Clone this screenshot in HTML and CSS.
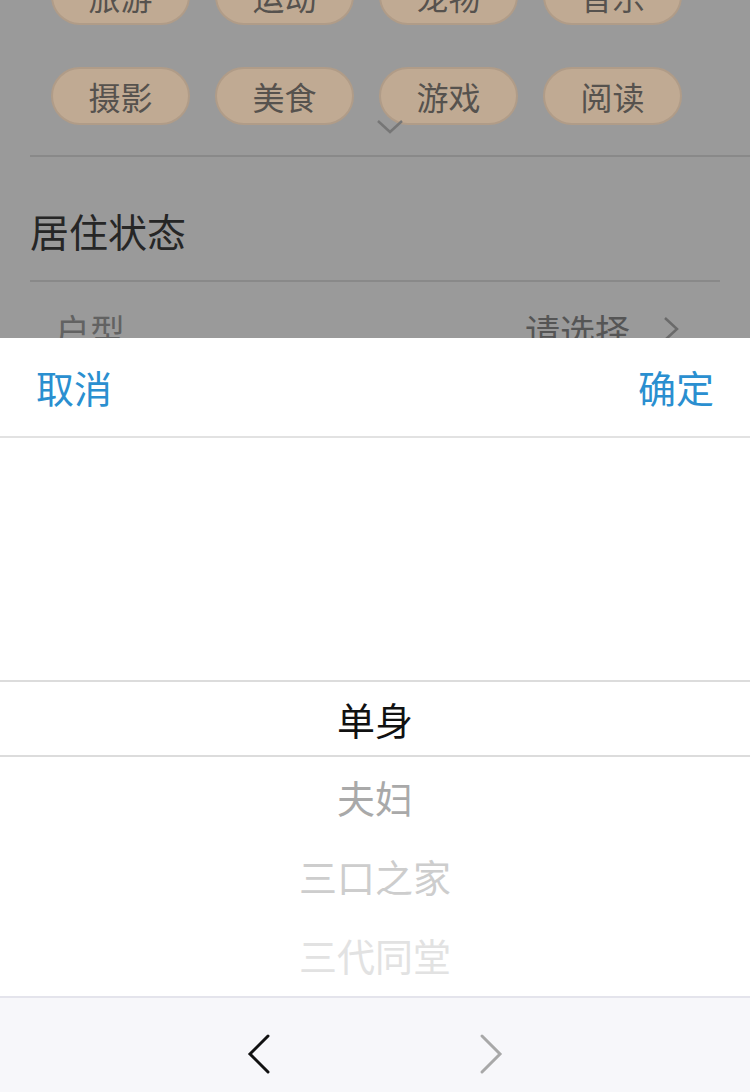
FILE: index.html
```html
<!DOCTYPE html>
<html lang="zh-CN">
<head>
    <meta charset="UTF-8">
    <meta name="viewport" content="width=device-width, initial-scale=1.0">
    <title>居住状态</title>
    <link rel="stylesheet" href="styles.css">
</head>
<body>
    <div class="page">
        <div class="popup-edge"></div>

        <div class="tags">
            <span class="tag">旅游</span>
            <span class="tag">运动</span>
            <span class="tag">宠物</span>
            <span class="tag">音乐</span>
            <span class="tag">摄影</span>
            <span class="tag">美食</span>
            <span class="tag">游戏</span>
            <span class="tag">阅读</span>
            <svg class="more" width="28" height="16" viewBox="0 0 28 16">
                <path d="M2 2 L14 13 L26 2" fill="none" stroke="#767676" stroke-width="2.5"/>
            </svg>
        </div>
        <div class="divider"></div>

        <div class="section">
            <h2 class="section-title">居住状态</h2>
            <div class="row">
                <span class="row-label">户型</span>
                <span class="row-value">请选择
                    <svg width="18" height="28" viewBox="0 0 18 28">
                        <path d="M3 3 L15 14 L3 25" fill="none" stroke="#6a6a6a" stroke-width="2.5"/>
                    </svg>
                </span>
            </div>
        </div>
    </div>

    <!-- Picker sheet -->
    <div class="picker">
        <div class="picker-head">
            <button class="picker-btn">取消</button>
            <button class="picker-btn">确定</button>
        </div>
        <div class="wheel">
            <div class="wheel-item selected">单身</div>
            <div class="wheel-item near">夫妇</div>
            <div class="wheel-item mid">三口之家</div>
            <div class="wheel-item far">三代同堂</div>
        </div>
        <div class="picker-nav">
            <svg width="26" height="42" viewBox="0 0 26 42">
                <path d="M22 3 L4 21 L22 39" fill="none" stroke="#111" stroke-width="3" stroke-linecap="round"/>
            </svg>
            <svg width="26" height="42" viewBox="0 0 26 42">
                <path d="M4 3 L22 21 L4 39" fill="none" stroke="#a8a8a8" stroke-width="3" stroke-linecap="round"/>
            </svg>
        </div>
    </div>
</body>
</html>
```

FILE: styles.css
```css
/* Basic Reset */
* {
    box-sizing: border-box;
    margin: 0;
    padding: 0;
    font-family: "Noto Sans CJK SC", "Noto Sans", sans-serif;
}

body {
    width: 750px;
    height: 1092px;
    overflow: hidden;
    background-color: #9a9a9a;
}

button {
    border: none;
    outline: none;
    background: none;
    cursor: pointer;
}

.page {
    position: relative;
}

.popup-edge {
    position: absolute;
    left: 35px;
    top: -18px;
    width: 684px;
    height: 22px;
    background: #ebe7e3;
    border-radius: 0 0 16px 16px;
    z-index: 2;
}

.tags {
    position: relative;
    display: grid;
    grid-template-columns: repeat(4, 139px);
    grid-auto-rows: 58px;
    column-gap: 25px;
    row-gap: 42px;
    padding-left: 51px;
    margin-top: -33px;
}

.tag {
    display: flex;
    align-items: center;
    justify-content: center;
    background: #c0aa93;
    border: 2px solid #b09c88;
    border-radius: 29px;
    color: #56524e;
    font-size: 32px;
}

.more {
    position: absolute;
    left: 376px;
    top: 152px;
}

.divider {
    margin: 30px 0 0 30px;
    border-top: 2px solid #898989;
}

.section {
    margin: 0 30px;
}

.section-title {
    padding: 48px 0 25px;
    line-height: 50px;
    font-size: 39px;
    font-weight: 400;
    color: #262626;
    border-bottom: 2px solid #898989;
}

.row {
    display: flex;
    align-items: center;
    justify-content: space-between;
    height: 94px;
    padding: 0 40px 0 25px;
    font-size: 35px;
    color: #626262;
}

.row-value {
    display: flex;
    align-items: center;
    gap: 32px;
    color: #555;
}

/* Picker sheet */
.picker {
    position: fixed;
    left: 0;
    bottom: 0;
    width: 750px;
    height: 754px;
    background: #fff;
    display: flex;
    flex-direction: column;
}

.picker-head {
    display: flex;
    align-items: center;
    justify-content: space-between;
    height: 100px;
    padding: 0 36px;
    border-bottom: 2px solid #e2e2e2;
}

.picker-btn {
    font-size: 38px;
    color: #2a8fd0;
    line-height: 50px;
}

.wheel {
    flex: 1;
    padding-top: 242px;
    overflow: hidden;
}

.wheel-item {
    height: 79px;
    display: flex;
    align-items: center;
    justify-content: center;
    font-size: 38px;
    color: #a9a9a9;
}

.wheel-item.selected {
    height: 77px;
    color: #111;
    border-top: 2px solid #dcdcdc;
    border-bottom: 2px solid #dcdcdc;
}

.wheel-item.mid {
    color: #cdcdcd;
}

.wheel-item.far {
    color: #e2e2e2;
}

.picker-nav {
    height: 96px;
    display: flex;
    align-items: center;
    justify-content: center;
    gap: 206px;
    padding-top: 18px;
    background: #f7f7fa;
    border-top: 2px solid #e4e4ec;
}
```
